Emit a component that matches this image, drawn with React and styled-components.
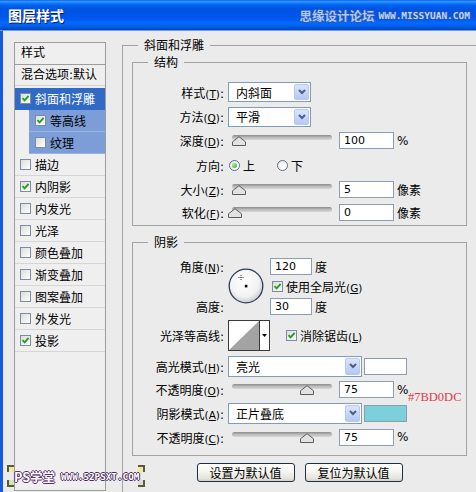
import styled, { createGlobalStyle } from 'styled-components';

const GlobalStyle = createGlobalStyle`
  html, body {
    margin: 0;
    padding: 0;
    background: #ebebeb;
    overflow: hidden;
  }
`;

const UI_FONT = `"DejaVu Sans", "Noto Sans CJK SC", sans-serif`;

const Window = styled.div`
  position: relative;
  width: 476px;
  height: 492px;
  display: flex;
  flex-direction: column;
  overflow: hidden;
  background: #ebebeb;
  font-family: ${UI_FONT};
  font-size: 12px;
  color: #000;
`;

const TitleBar = styled.div`
  height: 30px;
  flex: none;
  display: flex;
  align-items: center;
  padding: 0 6px 0 8px;
  border-bottom: 1px solid #6d9cf0;
  background: linear-gradient(
    to bottom,
    #0058ee 0%,
    #3593ff 4%,
    #288eff 7%,
    #127dff 10%,
    #036ffc 13%,
    #0262ee 18%,
    #0057e5 24%,
    #0054e3 30%,
    #0055eb 56%,
    #005bf5 66%,
    #026afe 76%,
    #0062ef 86%,
    #0052d6 92%,
    #0046c0 100%
  );
`;

const TitleText = styled.div`
  color: #fff;
  font-family: "Noto Sans CJK SC", sans-serif;
  font-weight: bold;
  font-size: 14px;
  text-shadow: 1px 1px 0 #0a1f7a;
`;

const Brand = styled.div`
  margin-left: auto;
  display: flex;
  align-items: center;
  gap: 4px;
`;

const BrandCn = styled.span`
  font-family: "Noto Sans CJK SC", sans-serif;
  font-size: 12.5px;
  font-weight: bold;
  color: #a9c8f6;
  text-shadow: 1px 0 0 #2857b4, -1px 0 0 #2857b4, 0 1px 0 #2857b4, 0 -1px 0 #2857b4;
`;

const BrandUrl = styled.span`
  font-family: "DejaVu Sans Mono", monospace;
  font-size: 9.5px;
  font-weight: bold;
  color: #bcd4f8;
  text-shadow: 1px 0 0 #2857b4, -1px 0 0 #2857b4, 0 1px 0 #2857b4, 0 -1px 0 #2857b4;
`;

const Body = styled.div`
  flex: 1;
  min-height: 0;
  display: flex;
  align-items: flex-start;
  border-left: 3px solid #1659e0;
  padding: 7px 0 0 11px;
`;

/* ---------- left style list ---------- */

const StyleList = styled.div`
  width: 92px;
  height: 449px;
  margin-top: 4px;
  flex: none;
  box-sizing: border-box;
  border: 1px solid #9d9d9d;
  background: #efefef;
  overflow: hidden;
  white-space: nowrap;
`;

const ListHead = styled.div`
  height: 21px;
  line-height: 20px;
  padding-left: 6px;
  border-bottom: 1px solid #9d9d9d;
`;

const BlendRow = styled.div`
  height: 20px;
  line-height: 20px;
  padding-left: 6px;
  border-bottom: 1px solid #d2d2d2;
`;

const Items = styled.div`
  padding-top: 2px;
`;

const Item = styled.div`
  display: flex;
  align-items: center;
  gap: 4px;
  height: 21px;
  margin-left: ${(p) => (p.$sub ? 14 : 0)}px;
  padding-left: ${(p) => (p.$sub ? 6 : 5)}px;
  border-bottom: 1px solid
    ${(p) => (p.$sel ? '#316ac5' : p.$sub ? '#9cb4e2' : '#d6d6d6')};
  background: ${(p) => (p.$sel ? '#316ac5' : p.$sub ? '#7d9dd8' : 'transparent')};
  color: ${(p) => (p.$sel ? '#fff' : '#000')};
`;

/* ---------- small controls ---------- */

const Box = styled.span`
  width: 11px;
  height: 11px;
  flex: none;
  box-sizing: border-box;
  border: 1px solid #7a8ca8;
  background: linear-gradient(135deg, #dcdcd6, #ffffff);
  display: inline-flex;
  align-items: center;
  justify-content: center;
`;

const Check = ({ on }) => (
  <Box>
    {on && (
      <svg width="9" height="9" viewBox="0 0 9 9">
        <path d="M1.5 4.2 L3.6 6.4 L7.6 1.8" fill="none" stroke="#21a121" strokeWidth="1.9" />
      </svg>
    )}
  </Box>
);

const RadioDot = styled.span`
  width: 11px;
  height: 11px;
  flex: none;
  box-sizing: border-box;
  border-radius: 50%;
  border: 1px solid #5b7196;
  background: radial-gradient(circle at 65% 65%, #ffffff 35%, #d5d5cf);
  display: inline-flex;
  align-items: center;
  justify-content: center;

  &::after {
    content: '';
    display: ${(p) => (p.$on ? 'block' : 'none')};
    width: 5px;
    height: 5px;
    border-radius: 50%;
    background: radial-gradient(circle at 35% 35%, #a6f0a6, #21a121);
  }
`;

const Mn = styled.span`
  font-family: "DejaVu Sans", sans-serif;
  font-size: 10.5px;

  u {
    text-underline-offset: 1px;
  }
`;

const Key = ({ k }) => (
  <Mn>
    (<u>{k}</u>)
  </Mn>
);

/* ---------- right panel ---------- */

const Group = styled.fieldset`
  margin: ${(p) => p.$mt || 0}px 0 0 ${(p) => p.$ml || 0}px;
  min-width: 0;
  flex: none;
  box-sizing: border-box;
  width: ${(p) => p.$w}px;
  border: 1px solid #a2a2a2;
  padding: ${(p) => p.$pad};
  position: relative;
`;

const Legend = styled.legend`
  font-size: 12px;
  line-height: 14px;
  padding: 0 6px;
  margin-left: ${(p) => p.$indent}px;
  font-family: "Noto Sans CJK SC", sans-serif;
`;

const Row = styled.div`
  position: relative;
  display: flex;
  align-items: center;
  height: ${(p) => p.$h}px;
  white-space: nowrap;
`;

const Label = styled.span`
  width: 91px;
  margin-right: 4px;
  flex: none;
  text-align: right;
  white-space: nowrap;
`;

const SelectBox = styled.div`
  width: ${(p) => p.$w}px;
  height: ${(p) => p.$h}px;
  flex: none;
  box-sizing: border-box;
  border: 1px solid #7f9db9;
  background: #fff;
  display: flex;
  align-items: center;
  padding-left: 7px;
`;

const DropBtn = styled.span`
  margin-left: auto;
  margin-right: 1px;
  width: 15px;
  height: calc(100% - 2px);
  box-sizing: border-box;
  border: 1px solid #b6c9f3;
  border-radius: 2px;
  background: linear-gradient(#dbe6fd, #b4c7f5);
  display: flex;
  align-items: center;
  justify-content: center;
`;

const Select = ({ w, h = 20, children }) => (
  <SelectBox $w={w} $h={h}>
    {children}
    <DropBtn>
      <svg width="8" height="6" viewBox="0 0 8 6">
        <path d="M1 1 L4 4 L7 1" fill="none" stroke="#4a5f8a" strokeWidth="2" />
      </svg>
    </DropBtn>
  </SelectBox>
);

const Field = styled.div`
  width: ${(p) => p.$w}px;
  height: 17px;
  flex: none;
  margin-left: ${(p) => p.$ml || 0}px;
  box-sizing: border-box;
  border: 1px solid #8d9db3;
  background: #fff;
  padding-left: 4px;
  font-family: "DejaVu Sans", sans-serif;
  font-size: 11px;
  line-height: 15px;
`;

const Unit = styled.span`
  margin-left: 3px;
`;

const SliderWrap = styled.div`
  position: relative;
  width: 104px;
  height: 11px;
  flex: none;
`;

const Track = styled.div`
  position: absolute;
  left: 4px;
  right: 0;
  top: 0;
  height: 5px;
  border-radius: 3px;
  background: linear-gradient(#8a8a8a, #b8b8b8 45%, #d8d8d8);
`;

const Thumb = styled.svg`
  position: absolute;
  top: 1px;
  left: ${(p) => p.$at}px;
`;

const Slider = ({ at }) => (
  <SliderWrap>
    <Track />
    <Thumb $at={at} width="14" height="10" viewBox="0 0 14 10">
      <path d="M0.5 9.5 V5.8 L7 0.7 L13.5 5.8 V9.5 Z" fill="#e2e2e2" stroke="#5c5c5c" />
    </Thumb>
  </SliderWrap>
);

const Inline = styled.div`
  display: flex;
  align-items: center;
  gap: ${(p) => p.$gap || 3}px;
  margin-left: ${(p) => p.$ml || 0}px;
  white-space: nowrap;
`;

const AngleGrid = styled.div`
  display: grid;
  grid-template-columns: 95px 36px auto;
  grid-template-rows: repeat(3, 20px);
  align-items: center;
`;

const Dial = styled.svg`
  grid-column: 2;
  grid-row: 1 / 4;
`;

const Contour = styled.div`
  display: flex;
  width: 42px;
  height: 31px;
  flex: none;
  box-sizing: border-box;
  border: 1px solid #3a3a3a;
  background: #fff;
`;

const ContourArrow = styled.div`
  flex: 1;
  border-left: 1px solid #3a3a3a;
  display: flex;
  align-items: center;
  justify-content: center;
`;

const Swatch = styled.div`
  width: 43px;
  height: 17px;
  flex: none;
  margin-left: 2px;
  box-sizing: border-box;
  border: 1px solid #8c9cb0;
  background: ${(p) => p.$c};
`;

const ColorNote = styled.span`
  position: absolute;
  left: 275px;
  top: 12px;
  font-family: "Liberation Serif", serif;
  font-size: 12.5px;
  color: #dc3c4a;
`;

const ButtonRow = styled.div`
  display: flex;
  justify-content: center;
  gap: 10px;
  margin-top: 7px;
  width: 335px;
`;

const Button = styled.div`
  width: 98px;
  height: 19px;
  box-sizing: border-box;
  border: 1px solid #1f3046;
  border-radius: 3px;
  background: linear-gradient(#ffffff, #f5f5f1 45%, #e4e3dc 85%, #d4cfc4);
  display: flex;
  align-items: center;
  justify-content: center;
  font-family: "Noto Sans CJK SC", sans-serif;
`;

/* ---------- watermark ---------- */

const Mark = styled.div`
  position: absolute;
  left: 14px;
  top: 467px;
  display: flex;
  align-items: center;
  gap: 6px;
`;

const MarkCn = styled.span`
  font-family: "Noto Sans CJK SC", sans-serif;
  font-size: 12.5px;
  font-weight: bold;
  color: #fff;
  text-shadow: 1px 0 0 #5a2b6e, -1px 0 0 #5a2b6e, 0 1px 0 #5a2b6e, 0 -1px 0 #5a2b6e;
`;

const MarkUrl = styled.span`
  font-family: "DejaVu Sans Mono", monospace;
  font-size: 9.3px;
  font-weight: bold;
  color: #fff;
  text-shadow: 1px 0 0 #4b2a5e, -1px 0 0 #4b2a5e, 0 1px 0 #4b2a5e, 0 -1px 0 #4b2a5e;
`;

const Corner = styled.span`
  position: absolute;
  left: ${(p) => p.$x}px;
  top: ${(p) => p.$y}px;
  width: 5px;
  height: 5px;
  background: ${(p) => p.$c};
  border-style: solid;
  border-color: #5d5a3a;
  border-width: ${(p) => p.$b};
`;

const listItems = [
  { t: '斜面和浮雕', on: true, sel: true },
  { t: '等高线', on: true, sub: true },
  { t: '纹理', on: false, sub: true },
  { t: '描边', on: false },
  { t: '内阴影', on: true },
  { t: '内发光', on: false },
  { t: '光泽', on: false },
  { t: '颜色叠加', on: false },
  { t: '渐变叠加', on: false },
  { t: '图案叠加', on: false },
  { t: '外发光', on: false },
  { t: '投影', on: true },
];

export default function App() {
  return (
    <Window>
      <GlobalStyle />
      <TitleBar>
        <TitleText>图层样式</TitleText>
        <Brand>
          <BrandCn>思缘设计论坛</BrandCn>
          <BrandUrl>WWW.MISSYUAN.COM</BrandUrl>
        </Brand>
      </TitleBar>

      <Body>
        <StyleList>
          <ListHead>样式</ListHead>
          <BlendRow>混合选项:默认</BlendRow>
          <Items>
            {listItems.map((it) => (
              <Item key={it.t} $sel={it.sel} $sub={it.sub}>
                <Check on={it.on} />
                <span>{it.t}</span>
              </Item>
            ))}
          </Items>
        </StyleList>

        <Group $w={355} $ml={16} $pad="3px 9px 30px 9px">
          <Legend $indent={6}>斜面和浮雕</Legend>

          <Group $w={335} $pad="11px 0 2px 0">
            <Legend $indent={15}>结构</Legend>
            <Row $h={24}>
              <Label>
                样式<Key k="T" />:
              </Label>
              <Select w={83}>内斜面</Select>
            </Row>
            <Row $h={25}>
              <Label>
                方法<Key k="Q" />:
              </Label>
              <Select w={83}>平滑</Select>
            </Row>
            <Row $h={23}>
              <Label>
                深度<Key k="D" />:
              </Label>
              <Slider at={4} />
              <Field $w={55} $ml={7}>100</Field>
              <Unit>%</Unit>
            </Row>
            <Row $h={26}>
              <Label>方向:</Label>
              <Inline $ml={1}>
                <RadioDot $on />
                <span>上</span>
              </Inline>
              <Inline $ml={22}>
                <RadioDot />
                <span>下</span>
              </Inline>
            </Row>
            <Row $h={23}>
              <Label>
                大小<Key k="Z" />:
              </Label>
              <Slider at={4} />
              <Field $w={55} $ml={7}>5</Field>
              <Unit>像素</Unit>
            </Row>
            <Row $h={22}>
              <Label>
                软化<Key k="F" />:
              </Label>
              <Slider at={0} />
              <Field $w={55} $ml={7}>0</Field>
              <Unit>像素</Unit>
            </Row>
          </Group>

          <Group $w={335} $mt={9} $pad="7px 0 6px 0">
            <Legend $indent={15}>阴影</Legend>
            <AngleGrid>
              <Label>
                角度<Key k="N" />:
              </Label>
              <Dial width="36" height="36" viewBox="0 0 36 36">
                <defs>
                  <radialGradient id="dialFill" cx="45%" cy="40%" r="60%">
                    <stop offset="0%" stopColor="#ffffff" />
                    <stop offset="70%" stopColor="#f2f2f2" />
                    <stop offset="100%" stopColor="#c9ccd3" />
                  </radialGradient>
                </defs>
                <circle cx="18" cy="18" r="16.8" fill="url(#dialFill)" stroke="#2f3c58" strokeWidth="1.3" />
                <path d="M10.5 9.5 H15.5 M13 7 V12" stroke="#333" strokeWidth="1" strokeDasharray="1 1" />
                <rect x="16.8" y="16.8" width="2.6" height="2.6" fill="#000" />
              </Dial>
              <Inline $ml={6}>
                <Field $w={42}>120</Field>
                <span>度</span>
              </Inline>
              <Inline $ml={8} style={{ gridColumn: 3, gridRow: 2 }}>
                <Check on />
                <span>
                  使用全局光<Key k="G" />
                </span>
              </Inline>
              <Label style={{ gridColumn: 1, gridRow: 3 }}>高度:</Label>
              <Inline $ml={6} style={{ gridColumn: 3, gridRow: 3 }}>
                <Field $w={42}>30</Field>
                <span>度</span>
              </Inline>
            </AngleGrid>

            <Row $h={38}>
              <Label>光泽等高线:</Label>
              <Contour>
                <svg width="30" height="29" viewBox="0 0 30 29">
                  <polygon points="0,29 30,0 30,29" fill="#a3a3a3" />
                </svg>
                <ContourArrow>
                  <svg width="5" height="3" viewBox="0 0 5 3">
                    <polygon points="0,0 5,0 2.5,3" fill="#000" />
                  </svg>
                </ContourArrow>
              </Contour>
              <Inline $ml={16}>
                <Check on />
                <span>
                  消除锯齿<Key k="L" />
                </span>
              </Inline>
            </Row>

            <Row $h={24}>
              <Label>
                高光模式<Key k="H" />:
              </Label>
              <Select w={134} h={21}>亮光</Select>
              <Swatch $c="#ffffff" />
            </Row>
            <Row $h={23}>
              <Label>
                不透明度<Key k="O" />:
              </Label>
              <Slider at={72} />
              <Field $w={55} $ml={7}>75</Field>
              <Unit>%</Unit>
              <ColorNote>#7BD0DC</ColorNote>
            </Row>
            <Row $h={24}>
              <Label>
                阴影模式<Key k="A" />:
              </Label>
              <Select w={134} h={21}>正片叠底</Select>
              <Swatch $c="#7bd0dc" />
            </Row>
            <Row $h={24}>
              <Label>
                不透明度<Key k="C" />:
              </Label>
              <Slider at={72} />
              <Field $w={55} $ml={7}>75</Field>
              <Unit>%</Unit>
            </Row>
          </Group>

          <ButtonRow>
            <Button>设置为默认值</Button>
            <Button>复位为默认值</Button>
          </ButtonRow>
        </Group>
      </Body>

      <Corner $x={7} $y={465} $c="#efe9a8" $b="2px 0 0 2px" />
      <Corner $x={7} $y={480} $c="#cfe8b0" $b="0 0 2px 2px" />
      <Corner $x={138} $y={465} $c="#efe9a8" $b="2px 2px 0 0" />
      <Corner $x={138} $y={480} $c="#dcdcdc" $b="0 2px 2px 0" />
      <Mark>
        <MarkCn>PS学堂</MarkCn>
        <MarkUrl>WWW.52PSXT.COM</MarkUrl>
      </Mark>
    </Window>
  );
}
